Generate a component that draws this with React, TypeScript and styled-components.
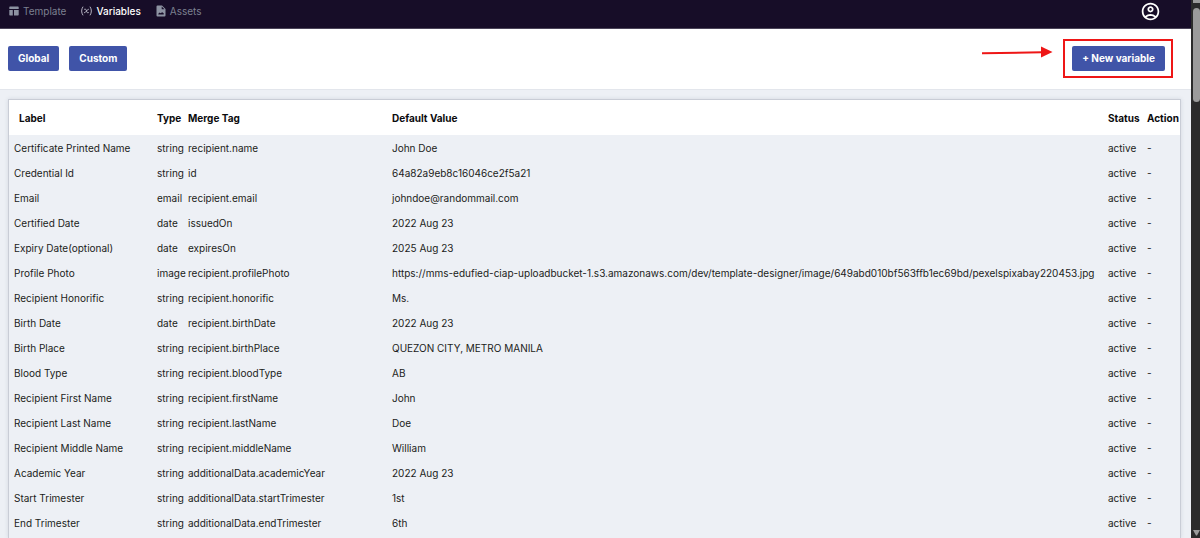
import React from "react";
import styled, { createGlobalStyle } from "styled-components";
import { MdOutlineAccountCircle } from "react-icons/md";

const GlobalStyle = createGlobalStyle`
  * { box-sizing: border-box; }
  body {
    margin: 0;
    font-family: Inter, "Liberation Sans", sans-serif;
    font-size: 10px;
    color: #1b1c20;
    background: #edf0f5;
  }
`;

const Shell = styled.div`
  display: flex;
  height: 100vh;
  overflow: hidden;
`;

const Page = styled.div`
  display: flex;
  flex: 1;
  flex-direction: column;
  min-width: 0;
`;

const TopBar = styled.header`
  display: flex;
  align-items: center;
  justify-content: space-between;
  flex: none;
  height: 29px;
  padding: 0 30px 6px 9px;
  background: #170d28;
  border-bottom: 1px solid #4b4459;
`;

const Tabs = styled.nav`
  display: flex;
  align-items: center;
  gap: 15px;
`;

const Tab = styled.a<{ $active?: boolean }>`
  display: flex;
  align-items: center;
  gap: 4px;
  line-height: 16px;
  text-decoration: none;
  font-weight: ${(p) => (p.$active ? 500 : 400)};
  color: ${(p) => (p.$active ? "#ffffff" : "#7c8090")};

  svg {
    display: block;
    flex: none;
    color: ${(p) => (p.$active ? "#b4b2c0" : "#8d93a2")};
  }
`;

const AccountButton = styled.button`
  display: flex;
  padding: 0;
  border: 0;
  background: none;
  color: #ffffff;
`;

const Toolbar = styled.div`
  display: flex;
  align-items: center;
  justify-content: space-between;
  flex: none;
  height: 61px;
  padding: 0 18px 1px 8px;
  background: #ffffff;
  border-bottom: 1px solid #e3e6ec;
`;

const ButtonGroup = styled.div`
  display: flex;
  align-items: center;
  gap: 10px;
`;

const Button = styled.button`
  height: 25px;
  padding: 0 10px;
  border: 0;
  border-radius: 2px;
  background: #4054a8;
  color: #ffffff;
  font: 700 10px/25px Inter, "Liberation Sans", sans-serif;
  white-space: nowrap;
`;

const Highlight = styled.div`
  display: flex;
  padding: 5px 6px 5px 7px;
  border: 2px solid #ee1616;
`;

const Arrow = styled.svg`
  display: block;
  margin-bottom: 14px;
`;

const Card = styled.main`
  flex: 1;
  min-height: 0;
  margin: 9px 10px 0 8px;
  border: solid #c9cdd6;
  border-width: 1px 1px 0;
  box-shadow: 0 0 4px rgba(60, 70, 100, 0.14);
  overflow: hidden;
`;

const Table = styled.table`
  width: 100%;
  table-layout: fixed;
  border-collapse: collapse;
`;

const Col = styled.col<{ $width?: number }>`
  width: ${(p) => (p.$width ? `${p.$width}px` : "auto")};
`;

const HeadCell = styled.th`
  height: 35px;
  padding: 0;
  background: #ffffff;
  color: #0b0b0d;
  font-weight: 700;
  text-align: left;
  white-space: nowrap;

  &:first-child { padding-left: 10px; }
`;

const Cell = styled.td`
  height: 25px;
  padding: 0;
  white-space: nowrap;

  &:first-child { padding-left: 5px; }
`;

const ScrollTrack = styled.div`
  display: flex;
  flex-direction: column;
  flex: none;
  width: 9px;
  padding-left: 2px;
  background: #2b2b2b;
`;

const UpArrow = styled.div`
  flex: none;
  height: 3px;
  margin-bottom: 5px;
  background: #9b9b9b;
`;

const Thumb = styled.div`
  flex: none;
  height: 94px;
  margin-bottom: auto;
  border-radius: 4px;
  background: #9b9b9b;
`;

const DownArrow = styled.svg`
  display: block;
  flex: none;
  margin-bottom: 2px;
`;

const TemplateIcon = () => (
  <svg width="10" height="10" viewBox="0 0 10 10" fill="currentColor" aria-hidden="true">
    <path d="M1 0.5h8a.7.7 0 0 1 .7.7V3H.3V1.200A.7.7 0 0 1 1 .5zM.3 4h3.500v5.500H1a.7.7 0 0 1-.7-.7zM5 4h4.700v4.800a.7.7 0 0 1-.7.7H5z" />
  </svg>
);

const VariableIcon = () => (
  <svg
    width="11"
    height="10"
    viewBox="0 0 11 10"
    fill="none"
    stroke="currentColor"
    strokeLinecap="round"
    aria-hidden="true"
  >
    <path d="M1.800 1C.2 3.300.2 6.700 1.800 9M9.200 1c1.600 2.300 1.600 5.700 0 8" />
    <path d="M3.600 3.200c1.200-.4 1.600.4 1.900 1.800s.8 2.200 1.900 1.700M7.400 3.200C5.900 3.200 5.100 6.800 3.500 6.800" />
  </svg>
);

const AssetIcon = () => (
  <svg width="10" height="12" viewBox="0 0 10 12" aria-hidden="true">
    <path
      fill="currentColor"
      fillRule="evenodd"
      d="M1.500.5H6L9.500 4v6.500a1 1 0 0 1-1 1h-7a1 1 0 0 1-1-1v-9a1 1 0 0 1 1-1zM5.700 1.500v2.800h2.800zM2.300 9.500h5.400V8.300L6.200 7.300 4.500 8.200l-.8-.7L2.300 8.700z"
    />
  </svg>
);

const columns = [
  { title: "Label", width: 148 },
  { title: "Type", width: 31 },
  { title: "Merge Tag", width: 204 },
  { title: "Default Value" },
  { title: "Status", width: 39 },
  { title: "Action", width: 33 },
];

const variables = [
  ["Certificate Printed Name", "string", "recipient.name", "John Doe"],
  ["Credential Id", "string", "id", "64a82a9eb8c16046ce2f5a21"],
  ["Email", "email", "recipient.email", "johndoe@randommail.com"],
  ["Certified Date", "date", "issuedOn", "2022 Aug 23"],
  ["Expiry Date(optional)", "date", "expiresOn", "2025 Aug 23"],
  [
    "Profile Photo",
    "image",
    "recipient.profilePhoto",
    "https://mms-edufied-ciap-uploadbucket-1.s3.amazonaws.com/dev/template-designer/image/649abd010bf563ffb1ec69bd/pexelspixabay220453.jpg",
  ],
  ["Recipient Honorific", "string", "recipient.honorific", "Ms."],
  ["Birth Date", "date", "recipient.birthDate", "2022 Aug 23"],
  ["Birth Place", "string", "recipient.birthPlace", "QUEZON CITY, METRO MANILA"],
  ["Blood Type", "string", "recipient.bloodType", "AB"],
  ["Recipient First Name", "string", "recipient.firstName", "John"],
  ["Recipient Last Name", "string", "recipient.lastName", "Doe"],
  ["Recipient Middle Name", "string", "recipient.middleName", "William"],
  ["Academic Year", "string", "additionalData.academicYear", "2022 Aug 23"],
  ["Start Trimester", "string", "additionalData.startTrimester", "1st"],
  ["End Trimester", "string", "additionalData.endTrimester", "6th"],
];

export default function App() {
  return (
    <>
      <GlobalStyle />
      <Shell>
        <Page>
          <TopBar>
            <Tabs>
              <Tab href="#template">
                <TemplateIcon />
                Template
              </Tab>
              <Tab href="#variables" $active aria-current="page">
                <VariableIcon />
                Variables
              </Tab>
              <Tab href="#assets">
                <AssetIcon />
                Assets
              </Tab>
            </Tabs>
            <AccountButton type="button" aria-label="Account">
              <MdOutlineAccountCircle size={21} />
            </AccountButton>
          </TopBar>
          <Toolbar>
            <ButtonGroup>
              <Button type="button">Global</Button>
              <Button type="button">Custom</Button>
            </ButtonGroup>
            <ButtonGroup>
              <Arrow width="71" height="12" viewBox="0 0 71 12" aria-hidden="true">
                <path d="M0 7.300L60 6.200" stroke="#ee1616" strokeWidth="2" />
                <path d="M59 0.500L70.500 6L59 11.500z" fill="#ee1616" />
              </Arrow>
              <Highlight>
                <Button type="button">+ New variable</Button>
              </Highlight>
            </ButtonGroup>
          </Toolbar>
          <Card>
            <Table>
              <colgroup>
                {columns.map((c) => (
                  <Col key={c.title} $width={c.width} />
                ))}
              </colgroup>
              <thead>
                <tr>
                  {columns.map((c) => (
                    <HeadCell key={c.title} scope="col">
                      {c.title}
                    </HeadCell>
                  ))}
                </tr>
              </thead>
              <tbody>
                {variables.map((row) => (
                  <tr key={row[0]}>
                    {row.map((value, i) => (
                      <Cell key={i}>{value}</Cell>
                    ))}
                    <Cell>active</Cell>
                    <Cell>-</Cell>
                  </tr>
                ))}
              </tbody>
            </Table>
          </Card>
        </Page>
        <ScrollTrack aria-hidden="true">
          <UpArrow />
          <Thumb />
          <DownArrow width="7" height="7" viewBox="0 0 7 7">
            <path d="M0 1h7L4 6.500H3z" fill="#9b9b9b" />
          </DownArrow>
        </ScrollTrack>
      </Shell>
    </>
  );
}
